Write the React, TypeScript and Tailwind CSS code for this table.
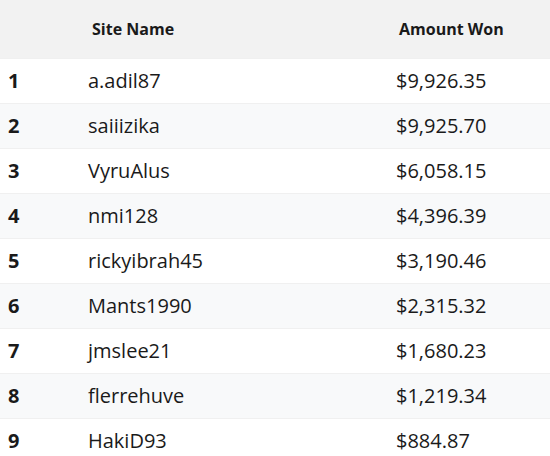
const rows = [
  { rank: 1, name: "a.adil87", amount: "$9,926.35" },
  { rank: 2, name: "saiiizika", amount: "$9,925.70" },
  { rank: 3, name: "VyruAlus", amount: "$6,058.15" },
  { rank: 4, name: "nmi128", amount: "$4,396.39" },
  { rank: 5, name: "rickyibrah45", amount: "$3,190.46" },
  { rank: 6, name: "Mants1990", amount: "$2,315.32" },
  { rank: 7, name: "jmslee21", amount: "$1,680.23" },
  { rank: 8, name: "flerrehuve", amount: "$1,219.34" },
  { rank: 9, name: "HakiD93", amount: "$884.87" },
]

export default function App() {
  return (
    <div className="w-[550px] h-[456px] overflow-hidden bg-white font-['Open_Sans',sans-serif] text-[#1a1a1a]">
      <table className="w-full border-collapse">
        <thead>
          <tr className="h-[58px] bg-[#f2f2f2] text-[16px] font-bold text-left">
            <th className="w-[88px] pl-2"></th>
            <th className="w-[308px] pl-[4px]">Site Name</th>
            <th className="pl-[3px]">Amount Won</th>
          </tr>
        </thead>
        <tbody>
          {rows.map((r) => (
            <tr
              key={r.rank}
              className={
                "h-[45px] text-[20px] border-t border-[#f0f0f0] " +
                (r.rank % 2 === 0 ? "bg-[#f8f9fa]" : "bg-white")
              }
            >
              <td className="pl-2 font-bold">{r.rank}</td>
              <td>{r.name}</td>
              <td>{r.amount}</td>
            </tr>
          ))}
        </tbody>
      </table>
    </div>
  )
}
